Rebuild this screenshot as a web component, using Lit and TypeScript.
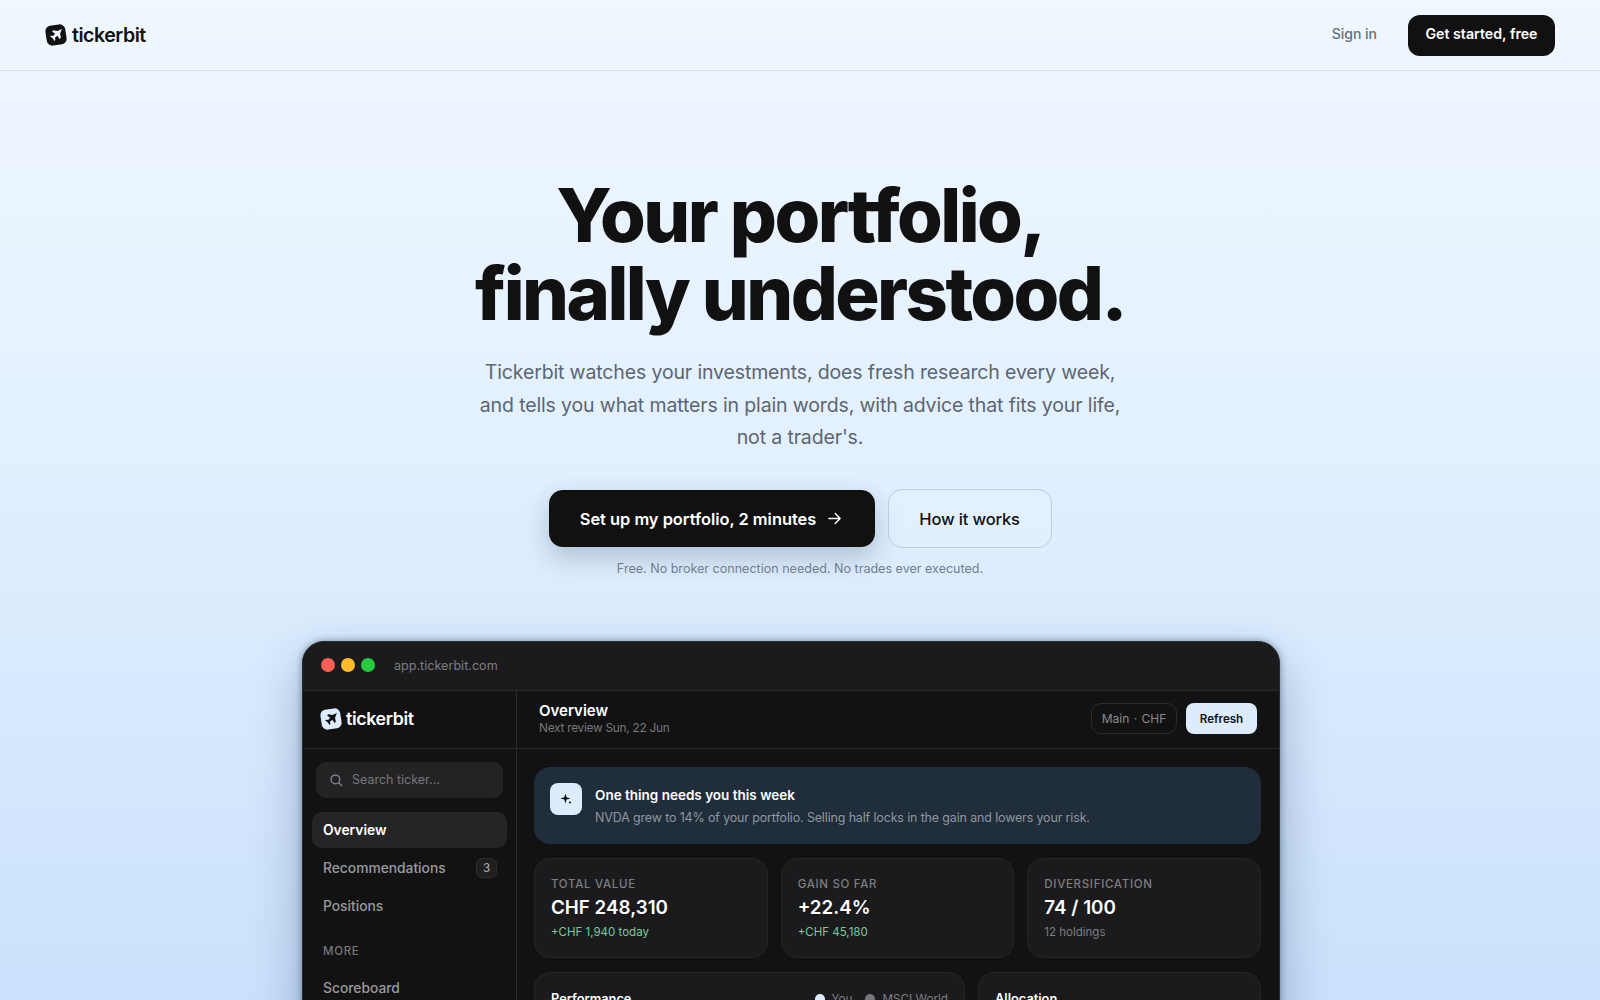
import { LitElement, html, css, svg } from 'lit';
import { customElement } from 'lit/decorators.js';

const logoMark = (bg: string, fg: string, size: number) => html`
  <svg width=${size} height=${size} viewBox="0 0 24 24" aria-hidden="true">
    <rect x="2" y="2" width="20" height="20" rx="5.5" fill=${bg} transform="rotate(-9 12 12)"></rect>
    ${svg`<path fill=${fg} transform="translate(12 12) scale(0.84) translate(-12 -12)" d="M19 5 L13.6 7.2 L8.8 6.2 L7.3 7.7 L11 10.4 L8.6 13.2 L6 12.8 L5 13.8 L8.1 15.9 L10.2 19 L11.2 18 L10.8 15.4 L13.6 13 L16.3 16.7 L17.8 15.2 L16.8 10.4 Z"></path>`}
  </svg>
`;

const STATS = [
  { label: 'TOTAL VALUE', value: 'CHF 248,310', sub: '+CHF 1,940 today', up: true },
  { label: 'GAIN SO FAR', value: '+22.4%', sub: '+CHF 45,180', up: true },
  { label: 'DIVERSIFICATION', value: '74 / 100', sub: '12 holdings', up: false },
];

@customElement('app-root')
export class AppRoot extends LitElement {
  static styles = css`
    :host {
      display: block;
      height: 100vh;
      overflow: hidden;
      font-family: Inter, 'Noto Sans', sans-serif;
      color: #111;
      background: linear-gradient(180deg, #f0f7ff 0%, #e2f0ff 45%, #c9e1fb 100%);
    }

    /* top bar */
    .nav {
      height: 70px;
      display: flex;
      align-items: center;
      justify-content: space-between;
      padding: 0 45px 0 44px;
      border-bottom: 1px solid #d9e2ec;
    }

    .brand {
      display: flex;
      align-items: center;
      gap: 4px;
      font-size: 19.6px;
      font-weight: 600;
      letter-spacing: -0.025em;
    }

    .nav-right {
      display: flex;
      align-items: center;
      gap: 31px;
    }

    .signin {
      padding-bottom: 3px;
      font-size: 14px;
      font-weight: 500;
      color: #66707a;
    }

    .cta-small {
      box-sizing: border-box;
      height: 41px;
      width: 147px;
      padding-bottom: 3px;
      display: flex;
      align-items: center;
      justify-content: center;
      border-radius: 12px;
      background: #111;
      color: #fff;
      font-size: 14.2px;
      font-weight: 600;
    }

    /* hero */
    .hero {
      display: flex;
      flex-direction: column;
      align-items: center;
      padding-top: 105px;
    }

    h1 {
      margin: 0 0 24px;
      font-size: 74px;
      line-height: 78px;
      font-weight: 800;
      letter-spacing: -0.035em;
      text-align: center;
      color: #111;
    }

    .lead {
      margin: 0 0 35.5px;
      font-size: 19.5px;
      line-height: 32.5px;
      letter-spacing: -0.007em;
      text-align: center;
      color: #5c6670;
    }

    .actions {
      display: flex;
      align-items: center;
      gap: 13px;
    }

    .btn-primary {
      width: 326px;
      height: 57px;
      display: flex;
      align-items: center;
      justify-content: center;
      gap: 10px;
      border-radius: 14px;
      background: #111;
      color: #fff;
      font-size: 16.4px;
      font-weight: 600;
      box-shadow: 0 10px 26px rgba(20, 40, 70, 0.24);
    }

    .btn-ghost {
      width: 164px;
      height: 59px;
      box-sizing: border-box;
      display: flex;
      align-items: center;
      justify-content: center;
      border-radius: 14px;
      border: 1px solid #b9cde2;
      background: rgba(255, 255, 255, 0.12);
      font-size: 16.5px;
      font-weight: 500;
      letter-spacing: -0.01em;
    }

    .note {
      margin: 11px 0 62px;
      font-size: 12.55px;
      line-height: 20px;
      color: #737e8c;
    }

    /* app window */
    .window {
      width: 978px;
      margin-right: 18px;
      box-sizing: border-box;
      border: 1px solid #2b2b2d;
      border-radius: 22px 22px 0 0;
      background: #121213;
      box-shadow: 0 20px 50px rgba(15, 35, 70, 0.3), 0 0 7px rgba(15, 35, 70, 0.45);
      overflow: hidden;
      color: #fff;
    }

    .titlebar {
      box-sizing: border-box;
      height: 49px;
      display: flex;
      align-items: center;
      gap: 19px;
      padding: 0 18px 2px;
      background: #1b1b1d;
      border-bottom: 1px solid #2a2a2c;
    }

    .dots {
      display: flex;
      gap: 6px;
    }

    .dot {
      width: 14px;
      height: 14px;
      border-radius: 50%;
    }

    .red { background: #ff5f57; }
    .yellow { background: #febc2e; }
    .green { background: #28c840; }

    .url {
      font-size: 12.6px;
      color: #7d7d82;
    }

    .shell {
      display: grid;
      grid-template-columns: 214px 1fr;
      height: 420px;
    }

    .side {
      border-right: 1px solid #2a2a2c;
    }

    .side-brand {
      height: 58px;
      box-sizing: border-box;
      display: flex;
      align-items: center;
      gap: 3px;
      padding: 0 0 2px 16px;
      border-bottom: 1px solid #2a2a2c;
      font-size: 17.8px;
      font-weight: 600;
      letter-spacing: -0.02em;
    }

    .side-body {
      padding: 13px 9px;
    }

    .search {
      box-sizing: border-box;
      height: 36px;
      margin: 0 4px 14px;
      display: flex;
      align-items: center;
      gap: 9px;
      padding: 0 0 1px 13px;
      border-radius: 10px;
      background: #232325;
      font-size: 12.5px;
      color: #77777b;
    }

    .item {
      height: 36px;
      display: flex;
      align-items: center;
      justify-content: space-between;
      padding: 0 10px 0 11px;
      margin-bottom: 2px;
      border-radius: 10px;
      font-size: 13.8px;
      font-weight: 500;
      color: #9a9a9e;
    }

    .item.active {
      background: #252527;
      color: #fff;
      font-weight: 600;
    }

    .badge {
      width: 21px;
      height: 20px;
      display: flex;
      align-items: center;
      justify-content: center;
      border-radius: 6px;
      background: #1f1f21;
      border: 1px solid #2c2c2e;
      box-sizing: border-box;
      font-size: 11.5px;
      color: #a5a5a8;
    }

    .group {
      margin: 19px 0 11px 11px;
      font-size: 11.5px;
      line-height: 16px;
      font-weight: 500;
      letter-spacing: 0.06em;
      color: #77777b;
    }

    .main-head {
      height: 58px;
      box-sizing: border-box;
      display: flex;
      align-items: center;
      justify-content: space-between;
      padding: 0 22px 2px;
      border-bottom: 1px solid #2a2a2c;
    }

    .head-title {
      font-size: 15px;
      line-height: 19px;
      font-weight: 600;
    }

    .head-sub {
      font-size: 11.8px;
      line-height: 16px;
      letter-spacing: -0.02em;
      color: #77777b;
    }

    .head-actions {
      display: flex;
      gap: 9px;
    }

    .pill {
      height: 31px;
      width: 86px;
      box-sizing: border-box;
      display: flex;
      align-items: center;
      justify-content: center;
      border: 1px solid #2c2c2e;
      border-radius: 10px;
      font-size: 12px;
      word-spacing: 1px;
      color: #8a8a8e;
    }

    .refresh {
      height: 31px;
      width: 71px;
      display: flex;
      align-items: center;
      justify-content: center;
      border-radius: 8px;
      background: #dcecfd;
      color: #111;
      font-size: 11.6px;
      font-weight: 600;
    }

    .content {
      padding: 18px 18px 18px 17px;
      display: flex;
      flex-direction: column;
      gap: 14px;
    }

    .insight {
      height: 77px;
      box-sizing: border-box;
      display: flex;
      align-items: center;
      gap: 13px;
      padding: 0 16px;
      border-radius: 16px;
      background: #202d3b;
    }

    .insight-icon {
      align-self: flex-start;
      margin-top: 16px;
      width: 32px;
      height: 32px;
      display: flex;
      align-items: center;
      justify-content: center;
      border-radius: 8px;
      background: #dcecfd;
    }

    .insight-title {
      font-size: 13.5px;
      line-height: 20px;
      font-weight: 600;
    }

    .insight-sub {
      margin-top: 4px;
      font-size: 12.45px;
      line-height: 18px;
      letter-spacing: -0.01em;
      color: #8f979f;
    }

    .stats {
      display: grid;
      grid-template-columns: repeat(3, 1fr);
      gap: 13px;
    }

    .card {
      box-sizing: border-box;
      border: 1px solid #262628;
      border-radius: 16px;
      background: #1b1b1d;
      padding: 16px;
    }

    .stat {
      height: 100px;
    }

    .stat-label {
      font-size: 11.5px;
      line-height: 18px;
      font-weight: 500;
      letter-spacing: 0.06em;
      color: #7d7d82;
    }

    .stat-value {
      margin-top: 1px;
      font-size: 18.8px;
      line-height: 28px;
      font-weight: 600;
    }

    .stat-sub {
      margin-top: 1px;
      font-size: 11.5px;
      line-height: 18px;
      color: #7d7d82;
    }

    .stat-sub.up {
      color: #7ec99b;
    }

    .charts {
      display: grid;
      grid-template-columns: 431px 1fr;
      gap: 13px;
    }

    .chart-head {
      display: flex;
      align-items: center;
      justify-content: space-between;
      font-size: 12.8px;
      line-height: 18px;
      font-weight: 600;
    }

    .legend {
      display: flex;
      align-items: center;
      gap: 7px;
      font-size: 11.7px;
      font-weight: 400;
      color: #7d7d82;
    }

    .swatch {
      width: 10px;
      height: 10px;
      border-radius: 50%;
      background: #dcecfd;
    }

    .swatch.muted {
      margin-left: 6px;
      background: #77777b;
    }

    .chart-card {
      height: 200px;
      padding-top: 17px;
    }
  `;

  render() {
    return html`
      <header class="nav">
        <div class="brand">${logoMark('#111', '#f0f7ff', 24)}<span>tickerbit</span></div>
        <div class="nav-right">
          <span class="signin">Sign in</span>
          <span class="cta-small">Get started, free</span>
        </div>
      </header>

      <section class="hero">
        <h1>Your portfolio,<br />finally understood.</h1>
        <p class="lead">
          Tickerbit watches your investments, does fresh research every week,<br />
          and tells you what matters in plain words, with advice that fits your life,<br />
          not a trader's.
        </p>
        <div class="actions">
          <span class="btn-primary">
            Set up my portfolio, 2 minutes
            <svg width="17" height="17" viewBox="0 0 24 24" fill="none" stroke="currentColor" stroke-width="2" stroke-linecap="round" stroke-linejoin="round">
              <path d="M4 12h16M13 5l7 7-7 7"></path>
            </svg>
          </span>
          <span class="btn-ghost">How it works</span>
        </div>
        <p class="note">Free. No broker connection needed. No trades ever executed.</p>

        ${this.renderWindow()}
      </section>
    `;
  }

  private renderWindow() {
    return html`
      <div class="window">
        <div class="titlebar">
          <div class="dots">
            <span class="dot red"></span><span class="dot yellow"></span><span class="dot green"></span>
          </div>
          <span class="url">app.tickerbit.com</span>
        </div>
        <div class="shell">
          <aside class="side">
            <div class="side-brand">${logoMark('#dcecfd', '#111', 24)}<span>tickerbit</span></div>
            <div class="side-body">
              <div class="search">
                <svg width="14" height="14" viewBox="0 0 24 24" fill="none" stroke="#8a8a8e" stroke-width="2.2" stroke-linecap="round">
                  <circle cx="11" cy="11" r="7.5"></circle>
                  <path d="M17 17l4.5 4.5"></path>
                </svg>
                Search ticker...
              </div>
              <div class="item active">Overview</div>
              <div class="item">Recommendations <span class="badge">3</span></div>
              <div class="item">Positions</div>
              <div class="group">MORE</div>
              <div class="item">Scoreboard</div>
            </div>
          </aside>
          <div>
            <div class="main-head">
              <div>
                <div class="head-title">Overview</div>
                <div class="head-sub">Next review Sun, 22 Jun</div>
              </div>
              <div class="head-actions">
                <span class="pill">Main · CHF</span>
                <span class="refresh">Refresh</span>
              </div>
            </div>
            <div class="content">
              <div class="insight">
                <span class="insight-icon">
                  <svg width="18" height="18" viewBox="0 0 16 16" fill="#111">
                    <path d="M7.5 3 L8.5 6.5 L12 7.5 L8.5 8.5 L7.5 12 L6.5 8.5 L3 7.5 L6.5 6.5 Z"></path>
                    <circle cx="11.6" cy="11.2" r="0.9"></circle>
                  </svg>
                </span>
                <div>
                  <div class="insight-title">One thing needs you this week</div>
                  <div class="insight-sub">NVDA grew to 14% of your portfolio. Selling half locks in the gain and lowers your risk.</div>
                </div>
              </div>
              <div class="stats">
                ${STATS.map(
                  (s) => html`
                    <div class="card stat">
                      <div class="stat-label">${s.label}</div>
                      <div class="stat-value">${s.value}</div>
                      <div class="stat-sub ${s.up ? 'up' : ''}">${s.sub}</div>
                    </div>
                  `,
                )}
              </div>
              <div class="charts">
                <div class="card chart-card">
                  <div class="chart-head">
                    Performance
                    <span class="legend">
                      <span class="swatch"></span>You
                      <span class="swatch muted"></span>MSCI World
                    </span>
                  </div>
                </div>
                <div class="card chart-card">
                  <div class="chart-head">Allocation</div>
                </div>
              </div>
            </div>
          </div>
        </div>
      </div>
    `;
  }
}
